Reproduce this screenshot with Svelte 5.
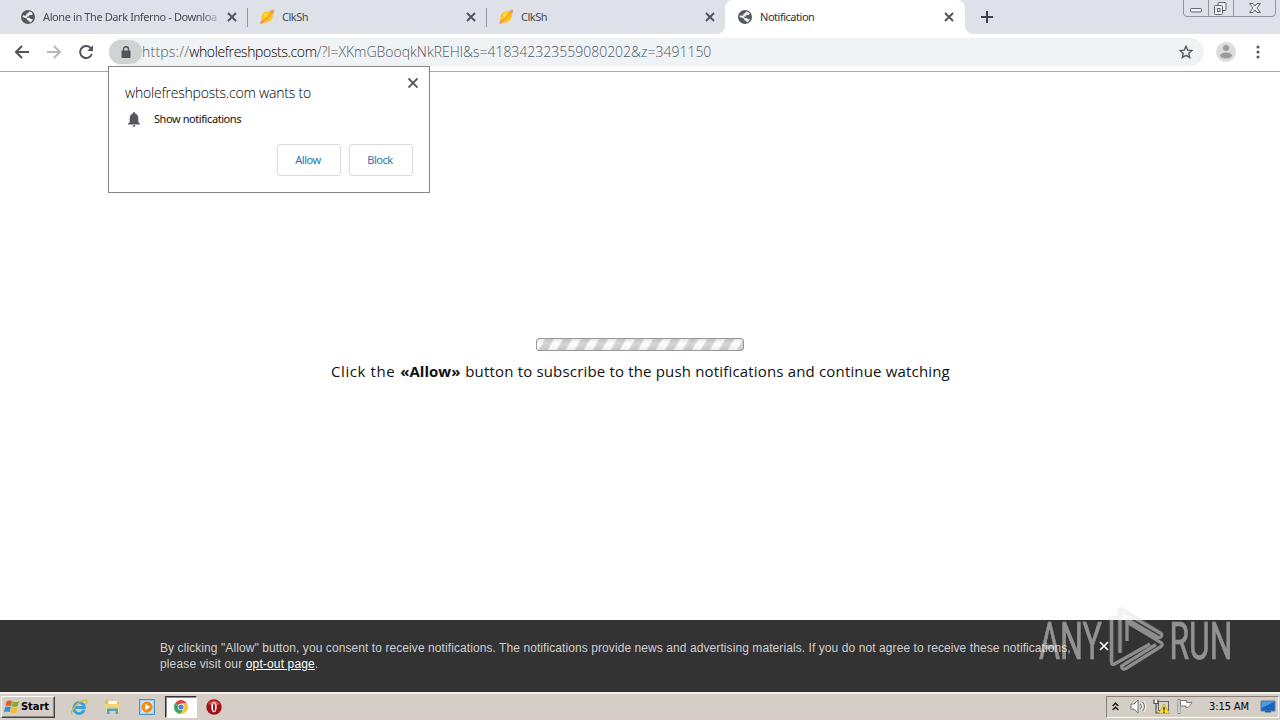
<script>
  const tabs = [
    { title: 'Alone in The Dark Inferno - Downloa', icon: 'globe', kind: 'first' },
    { title: 'ClkSh', icon: 'planet', kind: 'second' },
    { title: 'ClkSh', icon: 'planet', kind: 'third' },
    { title: 'Notification', icon: 'globe', kind: 'active' }
  ];
</script>

{#snippet cross()}
  <svg class="cross" width="10" height="10" viewBox="0 0 10 10"><path d="M1 1l8 8M9 1l-8 8" /></svg>
{/snippet}

<div class="screen">
  <header class="tabs">
    {#each tabs as tab}
      <div class="tab {tab.kind}">
        {#if tab.icon === 'globe'}
          <svg class="favicon" width="14" height="14" viewBox="0 0 14 14">
            <circle cx="7" cy="7" r="7" fill="#55585c" />
            <path d="M8 1.500l2.800.8 1 1.700-1.400.9-1.900.1-.8 1.600-1.700.2.3 1.200 2.200-.2 1.200 1.200 2.300.2-1.300 2.300-1.800 1-.9-1.600-1.800-.8-.4-1.700L1.500 7l.6-1.800L4 5.800l1.300-.6.2-1.400 1.700-.8z" fill="#eceef1" />
          </svg>
        {:else}
          <svg class="favicon" width="16" height="16" viewBox="0 0 16 16">
            <path d="M1 15Q1.500 11 4 8.500L11 2Q14 0 15 1t-1 4L8 12Q4.500 14.500 1 15z" fill="#ed9b78" />
            <path d="M2.500 9.500Q2 4 7 2.800T13.500 5Q14.500 9 11 12T5 13z" fill="#ffc51d" />
            <path d="M2 14Q8 10 14 2" fill="none" stroke="#f3a028" stroke-width="1.500" />
            <path d="M5 5l3-1 2 1-4 4z" fill="#ffdc3b" />
          </svg>
        {/if}
        <span class="title">{tab.title}</span>
        {@render cross()}
      </div>
    {/each}
    <svg class="plus" width="12" height="12" viewBox="0 0 12 12"><path d="M6 0v12M0 6h12" stroke="#3c4048" stroke-width="2" /></svg>
    <svg class="controls" width="94" height="18" viewBox="0 0 94 18">
      <path d="M.5 0v13q0 3.500 3.500 3.500h85q3.500 0 3.500-3.500V0M25.500 0v16M50.500 0v16" fill="none" stroke="#92959c" />
      <g fill="#eef0f3" stroke="#62666e">
        <rect x="7.500" y="8.500" width="11" height="3.500" rx="1" />
        <rect x="35" y="2.500" width="8" height="8" rx="1" />
        <rect x="31.500" y="5.500" width="8" height="9" rx="1" />
        <rect x="34.500" y="8.500" width="2.500" height="3" />
        <path d="M66.500 3.500h3.500l2 2.500 2-2.500h3.500l-3.500 4.500 3.500 4.500H74l-2-2.500-2 2.500h-3.500L70 8z" />
      </g>
    </svg>
  </header>

  <nav class="toolbar">
    <svg class="back" width="14" height="14" viewBox="0 0 14 14"><path d="M14 7H1.500M7 1L1 7l6 6" /></svg>
    <svg class="forward" width="14" height="14" viewBox="0 0 14 14"><path d="M0 7h12.500M7 1l6 6-6 6" /></svg>
    <svg class="reload" width="14" height="14" viewBox="0 0 14 14"><path d="M12 3.500A6 6 0 1 0 12.800 9" /><path d="M14 .3V6H8.300z" class="tip" /></svg>
    <div class="address">
      <span class="lock">
        <svg width="10" height="12" viewBox="0 0 10 12"><path d="M2.500 5V3.200a2.500 2.500 0 0 1 5 0V5" fill="none" stroke="#505357" stroke-width="1.400" /><rect x=".5" y="4.500" width="9" height="7.500" rx="1" fill="#505357" /></svg>
      </span>
      <span class="url"><span class="scheme">https://</span><span class="host">wholefreshposts.com</span><span class="query">/?l=XKmGBooqkNkREHl&amp;s=418342323559080202&amp;z=3491150</span></span>
      <svg class="star" width="14" height="14" viewBox="0 0 14 14"><path d="M7 1.200l1.700 3.900 4.300.4-3.200 2.800.9 4.200L7 10.300l-3.700 2.200.9-4.200L1 5.500l4.300-.4z" fill="none" stroke="#55585c" stroke-width="1.400" /></svg>
    </div>
    <svg class="avatar" width="20" height="20" viewBox="0 0 20 20"><circle cx="10" cy="10" r="10" fill="#dcdcdc" /><circle cx="10" cy="6" r="3" fill="#9b9b9b" /><ellipse cx="10" cy="13.500" rx="6" ry="3" fill="#9b9b9b" /></svg>
    <svg class="dots" width="4" height="14" viewBox="0 0 4 14"><g fill="#505357"><circle cx="2" cy="2" r="1.500" /><circle cx="2" cy="7" r="1.500" /><circle cx="2" cy="12" r="1.500" /></g></svg>
  </nav>

  <main>
    <div class="progress"></div>
    <p><span class="lead">Click the</span> <b>«Allow»</b> <span class="rest">button to subscribe to the push notifications and continue watching</span></p>
  </main>

  <footer class="consent">
    <div class="notice">
      <div class="line">By clicking "Allow" button, you consent to receive notifications. The notifications provide news and advertising materials. If you do not agree to receive these notifications,</div>
      <div class="line2">please visit our <u>opt-out page</u>.</div>
    </div>
    {@render cross()}
  </footer>

  <div class="taskbar">
    <button class="start">
      <svg width="16" height="16" viewBox="0 0 16 16">
        <path d="M2.500 2.500Q5 .7 8 2L7 7Q4.500 5.800 1.500 7z" fill="#e65b28" />
        <path d="M8.700 2.400Q11.500 4 15 2l-1.200 5Q11 8.700 7.700 7.200z" fill="#82ae35" />
        <path d="M1.200 8Q4 6.800 6.800 8l-1 5Q3 12 0 13.200z" fill="#3b8fcc" />
        <path d="M7.500 8.200q3 1.500 6 .2l-1 4.800q-3 1.800-6 .2z" fill="#f6bd26" />
      </svg>
      <span>Start</span>
    </button>
    <svg class="ie" width="18" height="18" viewBox="0 0 18 18">
      <path d="M14.200 12A5.400 5.400 0 1 1 14.500 9.500H5" fill="none" stroke="#3aa2dc" stroke-width="2.800" />
      <path d="M2.500 16Q-.5 15 5 8.500T16 2q2 1-1 4.500" fill="none" stroke="#e2b52f" stroke-width="1.300" />
    </svg>
    <svg class="folder" width="17" height="16" viewBox="0 0 17 16">
      <path d="M1 4V1.500h5l1 1.500h8v10H1z" fill="#e3bd50" /><path d="M4 2h9v4H4z" fill="#fffbe0" /><path d="M1 5h15l-1 8H1z" fill="#f2d676" />
      <path d="M3 15V9.500h11V15h-2.500v-3h-6v3z" fill="#4aa3d2" />
    </svg>
    <svg class="player" width="16" height="16" viewBox="0 0 16 16">
      <rect x=".5" y=".5" width="15" height="15" fill="#a7d2ef" stroke="#4d93c7" /><rect x="2.500" y="2.500" width="11" height="11" fill="#e1effa" />
      <circle cx="8" cy="8" r="5.500" fill="#f08a18" /><path d="M6.300 4.800v6.400L11.300 8z" fill="#fff" />
    </svg>
    <div class="current">
      <svg width="14" height="14" viewBox="0 0 14 14">
        <path d="M7 7L1 3.400A7 7 0 0 1 13 3.500H7z" fill="#df4738" /><path d="M7 7L1 3.400A7 7 0 0 0 6.400 14L9.500 9z" fill="#3aa35a" /><path d="M7 3.500h6A7 7 0 0 1 6.400 14L9.800 9z" fill="#f3c332" />
        <circle cx="7" cy="7" r="3.300" fill="#fff" /><circle cx="7" cy="7" r="2.600" fill="#4286d8" />
      </svg>
    </div>
    <svg class="opera" width="16" height="16" viewBox="0 0 16 16"><circle cx="8" cy="8" r="7.700" fill="#a71014" /><path d="M2 5a7 7 0 0 1 12 0q-6 3-12 0" fill="#d5423e" /><ellipse cx="8" cy="8" rx="2.700" ry="5.200" fill="#fff" /><ellipse cx="8" cy="8" rx="1" ry="4.300" fill="#a71014" /></svg>
    <div class="tray">
      <svg class="chevrons" width="7" height="9" viewBox="0 0 7 9"><path d="M.7 4l2.800-2.800L6.300 4M.7 8l2.800-2.800L6.300 8" fill="none" stroke="#111" stroke-width="1.400" /></svg>
      <svg class="speaker" width="17" height="15" viewBox="0 0 17 15"><path d="M1 5h3l4-4v13l-4-4H1z" fill="#fff" stroke="#747474" /><path d="M10.500 5q2 2.500 0 5M12.500 3q4 4.500 0 9" fill="none" stroke="#747474" /><path d="M11.500 4q3 3.500 0 7M14 2q4 5.500 0 11" fill="none" stroke="#fff" stroke-width=".8" /></svg>
      <svg class="network" width="17" height="15" viewBox="0 0 17 15"><rect x="5.500" y="2.500" width="10" height="9" fill="#d4d4d4" stroke="#666" /><path d="M1 .5v4h4v-4M3 4.500V14h4" fill="none" stroke="#555" stroke-width="1.200" /><path d="M2 1h2v3H2z" fill="#fff" /><path d="M11 5l5.500 9.500h-11z" fill="#ffdd28" stroke="#c69d17" stroke-width=".7" /><path d="M11 8v3.500M11 12.500V14" stroke="#222" stroke-width="1.300" /></svg>
      <svg class="flag" width="17" height="15" viewBox="0 0 17 15"><path d="M1 .5h2v14H1z" fill="#fff" stroke="#777" stroke-width=".8" /><path d="M3.500 1.500h6v2h5.500l-2 3-2 2H9V7H3.500z" fill="#fff" stroke="#777" /></svg>
      <time>3:15 AM</time>
      <svg class="desktop" width="16" height="14" viewBox="0 0 16 14"><path d="M1 1h14v10H1z" fill="#1b62bd" stroke="#5b7fab" /><path d="M1.500 1.500h13L7 5.500 1.500 8z" fill="#4c9ae8" /><path d="M5 11h6v1.500H5z" fill="#34588c" /></svg>
    </div>
  </div>

  <section class="prompt">
    <svg class="dismiss" width="10" height="10" viewBox="0 0 10 10"><path d="M.5.5l9 9M9.500.5l-9 9" /></svg>
    <h1>wholefreshposts.com wants to</h1>
    <div class="permission">
      <svg width="12" height="15" viewBox="0 0 12 15"><path d="M6 0Q7.200 0 7.200 1.500 10.300 2.500 10.300 6.500V10L12 11.700V12.500H0v-.8L1.700 10V6.500Q1.700 2.500 4.800 1.500 4.800 0 6 0M4.500 13.200h3Q7.500 14.700 6 14.700T4.500 13.200" fill="#55585e" /></svg>
      <span>Show notifications</span>
    </div>
    <div class="actions"><button><span>Allow</span></button><button><span>Block</span></button></div>
  </section>

  <svg class="watermark" width="220" height="80" viewBox="0 0 220 80">
    <text x="1" y="51" textLength="63" lengthAdjust="spacingAndGlyphs">ANY</text>
    <text x="131.500" y="51" textLength="63" lengthAdjust="spacingAndGlyphs">RUN</text>
    <path class="halo" d="M73.500 54V9M82 45V3.500Q82.500 1 85 2.500L124 26" />
    <path class="mark" d="M80 9.500h-4q-2.500 0-2.500 2.500v42q0 3.500 3 2L112 36M82 45V5q0-3.500 3-2L123 25.500q2 2-.5 3.500-1.500.8-3 0L88.500 11M89 33V14l34 20.500q2.500 2 0 4L88 60.500q-4 2-4.500-2.500L118 36.500" />
  </svg>
</div>

<style>
  :global(body) { overflow: hidden; }
  .screen { position: relative; width: 1280px; height: 720px; display: flex; flex-direction: column; overflow: hidden; background: #fff; font-family: "Noto Sans", sans-serif; font-size: 11px; color: #111; }
  .screen * { box-sizing: border-box; }
  svg { display: block; flex: none; }
  .tabs { height: 34px; flex: none; display: flex; background: #dee1e8; }
  .tab { width: 239px; height: 34px; display: flex; align-items: center; padding-right: 11px; color: #484b50; }
  .first { width: 248px; padding: 0 11px 0 21px; }
  .first, .second { background: linear-gradient(#92959b, #92959b) right 0 top 8px / 1px 19px no-repeat; }
  .second, .third { padding-left: 11px; }
  .third { width: 238px; padding-right: 10px; }
  .active { width: 240px; padding-left: 13px; background: #fff; border-radius: 8px 8px 0 0; color: #303236; position: relative; }
  .active::before, .active::after { content: ""; position: absolute; bottom: 0; width: 8px; height: 8px; }
  .active::before { left: -8px; background: radial-gradient(circle at 0 0, #dee1e8 7.500px, #fff 8px); }
  .active::after { right: -8px; background: radial-gradient(circle at 100% 0, #dee1e8 7.500px, #fff 8px); }
  .title { margin-left: 8px; flex: 1; white-space: nowrap; line-height: 18px; letter-spacing: -.48px; }
  .second .title, .third .title { margin-left: 7px; }
  .first .title { flex: 0 0 175px; margin-right: auto; mask: linear-gradient(90deg, #000 158px, #0004 175px); letter-spacing: -.4px; }
  .cross { fill: none; stroke: #505359; stroke-width: 1.900; }
  .plus { margin: 11px 0 0 16px; }
  .controls { margin-left: auto; margin-right: 3px; }
  .toolbar { height: 38px; flex: none; display: flex; align-items: center; border-bottom: 1px solid #a8a8a8; padding: 0 20px 1px 15px; }
  .toolbar > svg path { fill: none; stroke: #505357; stroke-width: 2; }
  .toolbar .forward { margin-left: 18px; }
  .toolbar .forward path { stroke: #b8b8b8; }
  .toolbar .reload { margin-left: 18px; }
  .toolbar .reload .tip { fill: #505357; stroke: none; }
  .address { width: 1095px; height: 28px; margin-left: 16px; border-radius: 14px; background: #f0f3f5; display: flex; align-items: center; }
  .lock { width: 33px; height: 24px; border-radius: 12px; background: #d0d2d4; display: grid; place-items: center; }
  .url { display: flex; margin-top: -1px; font-family: "Open Sans", sans-serif; font-weight: 300; font-size: 14px; white-space: nowrap; color: #50565b; }
  .scheme { letter-spacing: .22px; }
  .host { color: #000; letter-spacing: -.36px; }
  .query { letter-spacing: -.01px; }
  .star { margin-left: auto; margin-right: 11px; }
  .avatar { margin-left: 12px; }
  .dots { margin-left: auto; }
  main { flex: 1; display: flex; flex-direction: column; align-items: center; padding-top: 266px; }
  .progress { width: 208px; height: 13px; border: 1px solid #999; border-radius: 3px; background: linear-gradient(#8883, #fff2 45%, #8882), repeating-linear-gradient(120deg, #fff 0 6px, #d0d0d0 8px 14px, #fff 15.600px); }
  p { margin: 9px 0 0; line-height: 22px; width: 618px; font-family: "Open Sans", sans-serif; font-size: 15px; white-space: nowrap; }
  .lead { letter-spacing: .6px; margin-right: 1px; }
  .rest { margin-left: 1px; letter-spacing: .17px; }
  .consent { height: 72px; flex: none; display: flex; background: #333; color: #d0d0d0; padding: 20px 0 0 160px; font: 12px/16px "Liberation Sans", sans-serif; }
  .notice { width: 912px; white-space: nowrap; }
  .line { letter-spacing: .08px; }
  .line2 { letter-spacing: .14px; }
  .consent u { color: #fff; }
  .consent .cross { margin: 1px 0 0 27px; stroke: #fff; stroke-width: 1.700; }
  .taskbar { height: 28px; flex: none; display: flex; align-items: center; background: #d5cec6; border-top: 2px solid #f2eee9; padding: 1px 1px 2px 1px; }
  .start { width: 54px; height: 22px; border: 1px solid; border-color: #fff #444 #444 #fff; box-shadow: inset -1px -1px #888; background: #d5cec6; display: flex; align-items: center; gap: 1px; padding: 0 2px; font: bold 11px "DejaVu Sans Condensed", "DejaVu Sans", sans-serif; font-stretch: condensed; color: #000; letter-spacing: -.05px; }
  .ie { margin-left: 15px; }
  .folder { margin-left: 16px; }
  .player { margin-left: 18px; }
  .current { width: 32px; height: 22px; margin-left: 10px; border: 1px solid; border-color: #333 #fff #fff #333; box-shadow: inset 1px 1px #888; background: #fff; display: grid; place-items: center; }
  .opera { margin-left: 9px; }
  .tray { margin-left: auto; width: 173px; height: 22px; border: 1px solid; border-color: #878179 #fff #fff #878179; display: flex; align-items: center; padding-left: 5px; }
  .speaker { margin-left: 11px; }
  .network { margin-left: 6px; }
  .flag { margin-left: 7px; }
  time { margin-left: 15px; width: 42px; font: 11px "DejaVu Sans Condensed", "DejaVu Sans", sans-serif; font-stretch: condensed; letter-spacing: -.1px; white-space: nowrap; color: #000; }
  .desktop { margin-left: 9px; }
  .prompt { position: absolute; left: 108px; top: 66px; width: 322px; height: 127px; background: #fff; border: 1px solid #858585; padding: 16px; }
  .dismiss { position: absolute; right: 11px; top: 11px; fill: none; stroke: #505357; stroke-width: 1.900; }
  h1 { margin: 0; font: 300 14px/20px "Open Sans", sans-serif; white-space: nowrap; letter-spacing: -.2px; color: #000; }
  .permission { display: flex; align-items: center; height: 16px; margin-top: 8px; padding-left: 3px; gap: 14px; white-space: nowrap; letter-spacing: -.42px; }
  .permission span { padding-bottom: 2px; }
  .actions { display: flex; justify-content: flex-end; gap: 8px; margin-top: 17px; }
  .actions button { width: 64px; height: 32px; border: 1px solid #d9dadd; border-radius: 3px; background: #fff; color: #2475b5; font: 11px "Noto Sans", sans-serif; padding: 0 2px 2px 0; letter-spacing: -.45px; }
  .watermark { position: absolute; left: 1038px; top: 608px; opacity: .5; pointer-events: none; overflow: visible; }
  .watermark text { font: 400 51px Roboto, sans-serif; fill: #f0f0f0; stroke: #f0f0f0; stroke-width: .7px; }
  .mark { fill: none; stroke: #e6e6e6; stroke-width: 3.300; }
  .halo { fill: none; stroke: #aaa; stroke-width: 5.500; opacity: .3; }
</style>
